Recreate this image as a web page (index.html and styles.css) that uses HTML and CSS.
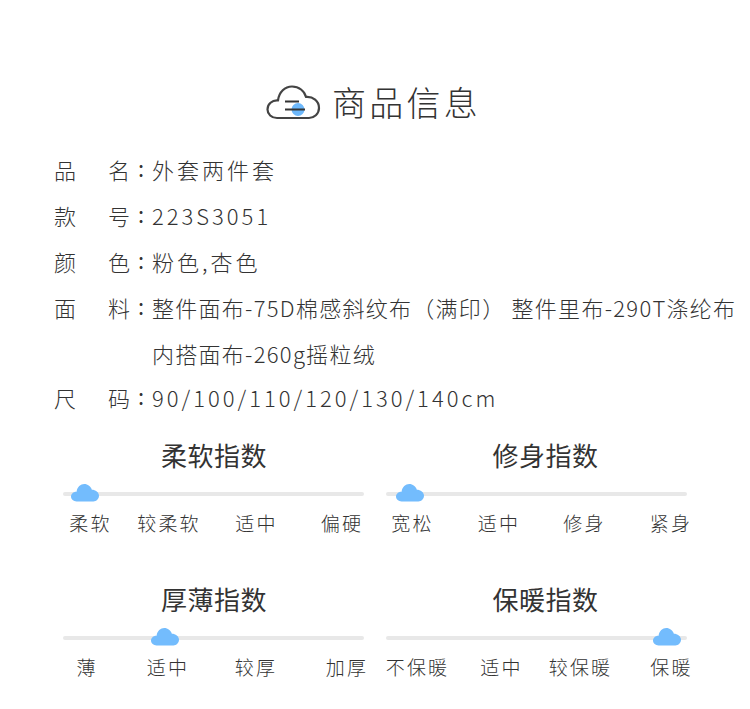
FILE: index.html
```html
<!DOCTYPE html>
<html lang="zh-CN">
<head>
<meta charset="utf-8">
<title>商品信息</title>
<link rel="stylesheet" href="styles.css">
</head>
<body>
<main class="page">
  <header class="head">
    <svg class="head-icon" viewBox="0 0 55 35" aria-hidden="true">
      <path class="outline" d="M11 33C5.500 33 1.500 29 1.500 24.500C1.500 19 6 15 12 15.500C13 7 19 1.500 26 1.500C33 1.500 38.500 6 40 12C47 11.500 53 16 53 23C53 29 48 33 43 33Z"/>
      <circle class="dot" cx="32" cy="24.500" r="6.500"/>
      <path class="dash" d="M19 16.500H33M19 24.500H39"/>
    </svg>
    <h1 class="title">商品信息</h1>
  </header>

  <dl class="specs">
    <div class="spec"><dt class="key"><span>品</span><span>名</span></dt><dd class="val">外套两件套</dd></div>
    <div class="spec"><dt class="key"><span>款</span><span>号</span></dt><dd class="val">223S3051</dd></div>
    <div class="spec"><dt class="key"><span>颜</span><span>色</span></dt><dd class="val">粉色,杏色</dd></div>
    <div class="spec"><dt class="key"><span>面</span><span>料</span></dt><dd class="val val-long">整件面布-75D棉感斜纹布（满印） 整件里布-290T涤纶布<br>内搭面布-260g摇粒绒</dd></div>
    <div class="spec"><dt class="key"><span>尺</span><span>码</span></dt><dd class="val">90/100/110/120/130/140cm</dd></div>
  </dl>

  <section class="meters">
    <article class="meter">
      <h2 class="meter-title">柔软指数</h2>
      <div class="track">
        <svg class="thumb thumb-a" viewBox="0 0 55 35" aria-hidden="true"><path d="M11 34C5 34 0 30 0 24.500C0 19 5 14.500 11 15C12 6 19 0 26 0C33 0 39 5 41 11C48 11 55 16 55 23C55 29 50 34 44 34Z"/></svg>
      </div>
      <div class="ticks ticks-soft"><span>柔软</span><span>较柔软</span><span>适中</span><span>偏硬</span></div>
    </article>
    <article class="meter">
      <h2 class="meter-title">修身指数</h2>
      <div class="track">
        <svg class="thumb thumb-b" viewBox="0 0 55 35" aria-hidden="true"><path d="M11 34C5 34 0 30 0 24.500C0 19 5 14.500 11 15C12 6 19 0 26 0C33 0 39 5 41 11C48 11 55 16 55 23C55 29 50 34 44 34Z"/></svg>
      </div>
      <div class="ticks ticks-fit"><span>宽松</span><span>适中</span><span>修身</span><span>紧身</span></div>
    </article>
    <article class="meter">
      <h2 class="meter-title">厚薄指数</h2>
      <div class="track">
        <svg class="thumb thumb-c" viewBox="0 0 55 35" aria-hidden="true"><path d="M11 34C5 34 0 30 0 24.500C0 19 5 14.500 11 15C12 6 19 0 26 0C33 0 39 5 41 11C48 11 55 16 55 23C55 29 50 34 44 34Z"/></svg>
      </div>
      <div class="ticks ticks-thick"><span>薄</span><span>适中</span><span>较厚</span><span>加厚</span></div>
    </article>
    <article class="meter">
      <h2 class="meter-title">保暖指数</h2>
      <div class="track">
        <svg class="thumb thumb-d" viewBox="0 0 55 35" aria-hidden="true"><path d="M11 34C5 34 0 30 0 24.500C0 19 5 14.500 11 15C12 6 19 0 26 0C33 0 39 5 41 11C48 11 55 16 55 23C55 29 50 34 44 34Z"/></svg>
      </div>
      <div class="ticks ticks-warm"><span>不保暖</span><span>适中</span><span>较保暖</span><span>保暖</span></div>
    </article>
  </section>
</main>
</body>
</html>
```
FILE: styles.css
```css
* { box-sizing: border-box; }
html, body { margin: 0; padding: 0; background: #fff; }
body {
  width: 750px;
  height: 709px;
  overflow: hidden;
  font-family: "Noto Sans CJK SC", "Noto Sans", sans-serif;
  color: #333;
}
.page { padding-top: 75px; }

.head {
  display: flex;
  justify-content: center;
  align-items: center;
  gap: 11px;
  height: 54px;
  padding-right: 3px;
}
.head-icon { width: 55px; height: 35px; }
.outline { fill: #fff; stroke: #444; stroke-width: 2.2; stroke-linejoin: round; }
.dot { fill: #6db8fb; }
.dash { fill: none; stroke: #333; stroke-width: 2; }
.title {
  margin: 0;
  font-size: 34px;
  font-weight: 300;
  letter-spacing: 3.2px;
  line-height: 54px;
  color: #333;
}

.specs { margin: 17px 0 0; padding: 0 0 0 54px; }
.spec { display: flex; line-height: 46px; font-size: 22px; font-weight: 300; }
.spec:last-child { margin-top: -2px; }
.key {
  display: flex;
  flex: none;
  justify-content: space-between;
  position: relative;
  width: 76px;
  margin-right: 22px;
}
.key::after {
  content: ":";
  position: absolute;
  right: -14px;
  top: -2px;
  font-weight: 400;
}
.val {
  margin: 0;
  white-space: nowrap;
  letter-spacing: 3px;
  font-weight: 300;
}
.val-long { letter-spacing: 1.28px; }

.meters {
  display: grid;
  grid-template-columns: 301px 318px;
  column-gap: 22px;
  margin-top: 16px;
  padding-left: 63px;
}
.meter { height: 144px; }
.meter-title {
  margin: 0;
  padding-left: 1px;
  text-align: center;
  font-size: 26px;
  font-weight: 400;
  letter-spacing: 0.5px;
  line-height: 38px;
  color: #333;
}
.track {
  position: relative;
  width: 301px;
  height: 4px;
  margin-top: 18px;
  background: #e8e8e8;
  border-radius: 2px;
}
.thumb { position: absolute; top: -8px; width: 28px; height: 18px; fill: #73bcfd; }
.thumb-a { left: 8px; }
.thumb-b { left: 10px; }
.thumb-c { left: 88px; }
.thumb-d { left: 267px; }
.ticks {
  display: grid;
  justify-items: center;
  margin-top: 12px;
  padding-left: 1px;
  font-size: 19px;
  font-weight: 300;
  letter-spacing: 2.2px;
  line-height: 30px;
  white-space: nowrap;
  color: #333;
}
.ticks-soft { grid-template-columns: 53px 104px 71px 100px; }
.ticks-fit { grid-template-columns: 51px 122px 49px 124px; }
.ticks-thick { grid-template-columns: 46px 116px 60px 122px; }
.ticks-warm { grid-template-columns: 61px 107px 51px 131px; }
```
